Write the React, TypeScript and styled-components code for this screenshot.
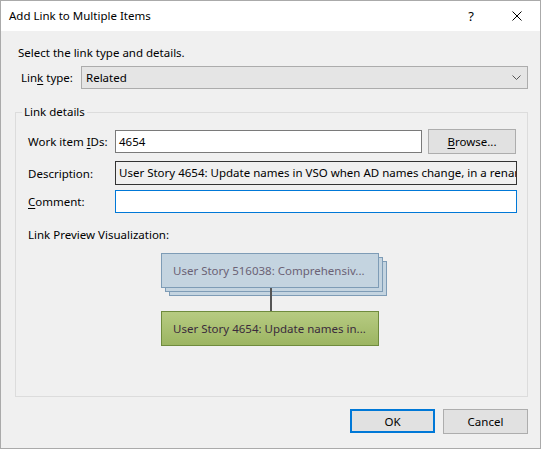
import React from "react";
import styled, { createGlobalStyle } from "styled-components";

const GlobalStyle = createGlobalStyle`
  html, body { margin: 0; padding: 0; background: #f0f0f0; }
  body { font-family: "Noto Sans", "Segoe UI", "Liberation Sans", sans-serif; font-size: 11.5px; color: #000; }
  * { box-sizing: border-box; }
`;

const Window = styled.div`
  width: 541px;
  height: 449px;
  border: 1px solid #aaaaaa;
  background: #f0f0f0;
  display: flex;
  flex-direction: column;
`;

const TitleBar = styled.div`
  height: 30px;
  background: #ffffff;
  display: flex;
  align-items: center;
  padding-left: 8px;
`;

const TitleText = styled.div`
  flex: 1;
  font-size: 11.5px;
  line-height: 16px;
`;

const CaptionButton = styled.div`
  width: 46px;
  height: 30px;
  display: flex;
  align-items: center;
  justify-content: center;
  font-size: 13px;
`;

const Body = styled.div`
  flex: 1;
  display: flex;
  flex-direction: column;
  padding: 0 12px 0 14px;
`;

const Intro = styled.div`
  margin: 14px 0 0 3px;
  line-height: 16px;
`;

const TypeRow = styled.div`
  display: flex;
  align-items: center;
  margin-top: 5px;
  height: 23px;
`;

const TypeLabel = styled.div`
  width: 66px;
  padding-left: 6px;
`;

const Select = styled.div`
  flex: 1;
  height: 23px;
  background: #e5e5e5;
  border: 1px solid #acacac;
  display: flex;
  align-items: center;
  padding: 0 6px 0 4px;
`;

const SelectValue = styled.div`
  flex: 1;
`;

const GroupBox = styled.div`
  position: relative;
  margin-top: 23px;
  height: 285px;
  border: 1px solid #dcdcdc;
  padding: 16px 0 0 12px;
  display: flex;
  flex-direction: column;
`;

const GroupTitle = styled.div`
  position: absolute;
  top: -9px;
  left: 6px;
  padding: 0 2px;
  background: #f0f0f0;
  line-height: 16px;
`;

const FieldRow = styled.div<{ $gap: number }>`
  display: flex;
  align-items: center;
  margin-top: ${(p) => p.$gap}px;
`;

const FieldLabel = styled.div`
  width: 87px;
`;

const TextInput = styled.div<{ $w: number; $border: string }>`
  width: ${(p) => p.$w}px;
  height: 23px;
  background: #ffffff;
  border: 1px solid ${(p) => p.$border};
  display: flex;
  align-items: center;
  padding-left: 3px;
`;

const Spacer = styled.div`
  width: 6px;
`;

const ReadOnlyBox = styled.div`
  width: 402px;
  height: 24px;
  background: #f0f0f0;
  border: 1px solid #333333;
  padding-left: 3px;
  line-height: 22px;
  white-space: nowrap;
  overflow: hidden;
`;

const Button = styled.div<{ $w: number; $primary?: boolean }>`
  width: ${(p) => p.$w}px;
  height: ${(p) => (p.$primary ? 24 : 25)}px;
  background: #e1e1e1;
  border: ${(p) => (p.$primary ? "2px solid #0078d7" : "1px solid #adadad")};
  display: flex;
  align-items: center;
  justify-content: center;
`;

const PreviewLabel = styled.div`
  margin-top: 14px;
  line-height: 16px;
`;

const Preview = styled.div`
  margin: 10px 0 0 133px;
  display: flex;
  flex-direction: column;
  width: 218px;
`;

const Card = styled.div<{ $kind: "linked" | "source" }>`
  width: 218px;
  height: 35px;
  padding-left: 11px;
  display: flex;
  align-items: center;
  white-space: nowrap;
  border: 1px solid ${(p) => (p.$kind === "linked" ? "#7e9cb6" : "#6f8b3d")};
  background: ${(p) =>
    p.$kind === "linked" ? "#c4d4e0" : "linear-gradient(#b7cb82, #9cb562)"};
  color: ${(p) => (p.$kind === "linked" ? "#6b6275" : "#3a2a3c")};
  box-shadow: ${(p) =>
    p.$kind === "linked"
      ? "4px 4px 0 -1px #c4d4e0, 4px 4px 0 0 #7e9cb6, 8px 8px 0 -1px #c4d4e0, 8px 8px 0 0 #7e9cb6"
      : "none"};
`;

const Connector = styled.div`
  width: 2px;
  height: 23px;
  background: #555555;
  margin-left: 109px;
`;

const Footer = styled.div`
  display: flex;
  justify-content: flex-end;
  gap: 8px;
  margin-top: 12px;
`;

const U = styled.span`
  text-decoration: underline;
  text-underline-offset: 2px;
`;

export default function App() {
  return (
    <>
      <GlobalStyle />
      <Window>
        <TitleBar>
          <TitleText>Add Link to Multiple Items</TitleText>
          <CaptionButton>?</CaptionButton>
          <CaptionButton>
            <svg width="10" height="10" viewBox="0 0 10 10">
              <path d="M0.5 0.5 L9.5 9.5 M9.5 0.5 L0.5 9.5" stroke="#000" strokeWidth="1" fill="none" />
            </svg>
          </CaptionButton>
        </TitleBar>
        <Body>
          <Intro>Select the link type and details.</Intro>
          <TypeRow>
            <TypeLabel>
              Lin<U>k</U> type:
            </TypeLabel>
            <Select>
              <SelectValue>Related</SelectValue>
              <svg width="9" height="5" viewBox="0 0 9 5">
                <path d="M0.5 0.5 L4.5 4.5 L8.5 0.5" stroke="#555" strokeWidth="1" fill="none" />
              </svg>
            </Select>
          </TypeRow>
          <GroupBox>
            <GroupTitle>Link details</GroupTitle>
            <FieldRow $gap={0}>
              <FieldLabel>
                Work item <U>I</U>Ds:
              </FieldLabel>
              <TextInput $w={307} $border="#7a7a7a">4654</TextInput>
              <Spacer />
              <Button $w={88}>
                <span>
                  <U>B</U>rowse...
                </span>
              </Button>
            </FieldRow>
            <FieldRow $gap={7}>
              <FieldLabel>Description:</FieldLabel>
              <ReadOnlyBox>
                User Story 4654: Update names in VSO when AD names change, in a rename scenario
              </ReadOnlyBox>
            </FieldRow>
            <FieldRow $gap={5}>
              <FieldLabel>
                <U>C</U>omment:
              </FieldLabel>
              <TextInput $w={402} $border="#0078d7" />
            </FieldRow>
            <PreviewLabel>Link Preview Visualization:</PreviewLabel>
            <Preview>
              <Card $kind="linked">User Story 516038: Comprehensiv...</Card>
              <Connector />
              <Card $kind="source">User Story 4654: Update names in...</Card>
            </Preview>
          </GroupBox>
          <Footer>
            <Button $w={85} $primary>
              OK
            </Button>
            <Button $w={85}>Cancel</Button>
          </Footer>
        </Body>
      </Window>
    </>
  );
}
